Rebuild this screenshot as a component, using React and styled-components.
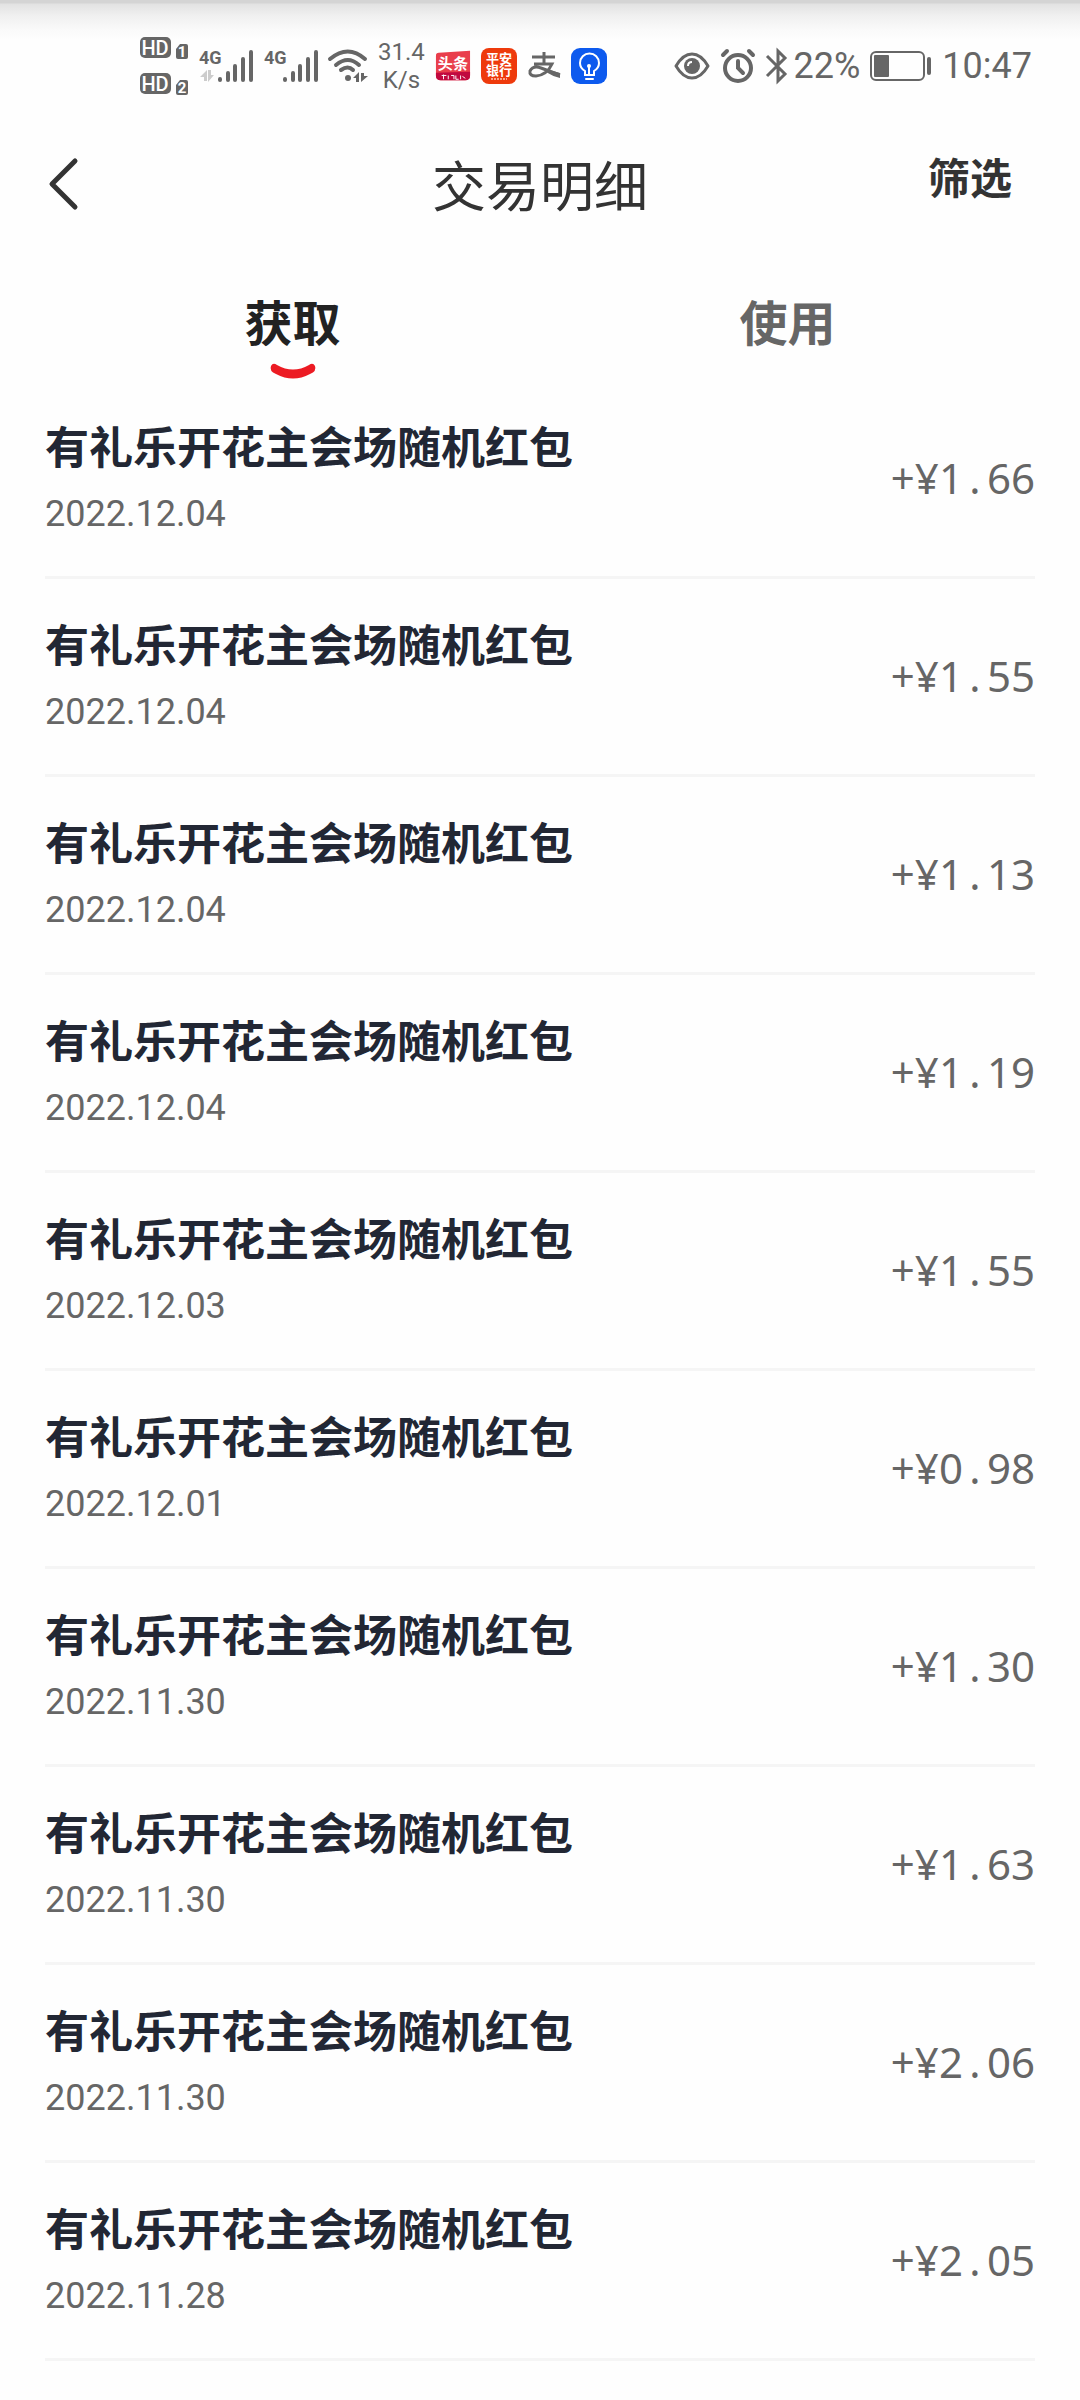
import React, { useState } from 'react';
import styled, { createGlobalStyle } from 'styled-components';

const records = [
    { id: 1, date: "2022.12.04", amount: "1.66" },
    { id: 2, date: "2022.12.04", amount: "1.55" },
    { id: 3, date: "2022.12.04", amount: "1.13" },
    { id: 4, date: "2022.12.04", amount: "1.19" },
    { id: 5, date: "2022.12.03", amount: "1.55" },
    { id: 6, date: "2022.12.01", amount: "0.98" },
    { id: 7, date: "2022.11.30", amount: "1.30" },
    { id: 8, date: "2022.11.30", amount: "1.63" },
    { id: 9, date: "2022.11.30", amount: "2.06" },
    { id: 10, date: "2022.11.28", amount: "2.05" },
];

const tabs = ["获取", "使用"];

const HdIcon = ({ sim }) => (
    <svg width="48" height="26" viewBox="0 -2 48 26">
        <rect x="0" y="0" width="31" height="21" rx="5" fill="#666" />
        <text x="15" y="18" textAnchor="middle" fontSize="20" fontWeight="500" fill="#fff">HD</text>
        <path d="M36 12l4-5h6q2 0 2 2v11q0 2-2 2h-8q-2 0-2-2z" fill="#666" />
        <text x="42" y="20" textAnchor="middle" fontSize="15" fontWeight="700" fill="#fff">{sim}</text>
    </svg>
);

const SignalIcon = ({ data }) => (
    <svg width="55" height="40" viewBox="0 -2 55 40">
        <text x="1" y="16" fontSize="18" fontWeight="700" fill="#666">4G</text>
        {data && (
            <path d="M2 29h4v4h3V22zM10 22v12l6-7h-3v-5z" fill="#ccc" />
        )}
        <g stroke="#666" strokeWidth="4" strokeLinecap="round">
            <path d="M22 31v1M30 25v7M37 18v14M45 11v21M53 4v28" />
        </g>
    </svg>
);

const WifiIcon = () => (
    <svg width="40" height="34" viewBox="0 0 40 34">
        <g fill="none" stroke="#666" strokeWidth="4" strokeLinecap="round">
            <path d="M2 10Q20-5 37 10" />
            <path d="M8 16Q20 6 31 16" />
            <path d="M13 21Q20 16 25 21" />
        </g>
        <circle cx="20" cy="29" r="3" fill="#666" />
        <path d="M25 29l6-6v10h-3v-4zM33 24h3v3h4l-7 6z" fill="#666" />
    </svg>
);

const NewsIcon = () => (
    <svg width="36" height="32" viewBox="0 0 38 32">
        <path d="M1 5q0-3 3-3L37 0v26q0 5-5 5H6q-5 0-5-5z" fill="#e93e4c" />
        <path d="M1 23l36-1v4q0 5-5 5H6q-5 0-5-5z" fill="#c1093f" />
        <text x="19" y="19" textAnchor="middle" fontSize="16" fontWeight="700" fill="#fff">头条</text>
        <path d="M7 26h5M9 25v5M14 26v4M17 26h3v4M22 26v4h3M27 26v4M29 27l3 2" stroke="#fff" strokeWidth="1" fill="none" />
    </svg>
);

const BankIcon = () => (
    <svg width="36" height="36" viewBox="0 0 36 36">
        <rect width="36" height="36" rx="8" fill="#ee3a0c" />
        <text x="18" y="15" textAnchor="middle" fontSize="13" fontWeight="700" fill="#fff">平安</text>
        <text x="18" y="27" textAnchor="middle" fontSize="13" fontWeight="700" fill="#fff">银行</text>
        <path d="M10 31h16" stroke="#fba58b" strokeWidth="2" strokeDasharray="2 1" />
    </svg>
);

const PayIcon = () => (
    <svg width="34" height="28" viewBox="0 0 34 28">
        <g fill="none" stroke="#666" strokeWidth="3">
            <path d="M5 5h23M17 0v12M7 12h18Q20 23 9 24Q2 24 3 19Q6 13 14 16Q22 19 33 23" />
        </g>
        <path d="M19 17l14 4v5q-8-2-14-6z" fill="#666" />
    </svg>
);

const BulbIcon = () => (
    <svg width="36" height="36" viewBox="0 0 36 36">
        <rect width="36" height="36" rx="9" fill="#0d5aee" />
        <g fill="none" stroke="#fff" strokeWidth="2" strokeLinecap="round">
            <path d="M14 27v-4q-5-3-5-8a9 9 0 0 1 19 0q0 5-5 8v4zM15 31h7M18 19v7" />
        </g>
        <circle cx="18" cy="18" r="2" fill="#fff" />
    </svg>
);

const EyeIcon = () => (
    <svg width="36" height="28" viewBox="0 0 36 28">
        <path d="M2 14Q9 2 18 2T34 14Q27 26 18 26T2 14z" fill="none" stroke="#666" strokeWidth="3" strokeLinejoin="round" />
        <circle cx="18" cy="14" r="8" fill="#666" />
        <path d="M14 14q0-4 4-4" fill="none" stroke="#fff" strokeWidth="2" />
    </svg>
);

const AlarmIcon = () => (
    <svg width="36" height="34" viewBox="-1 0 36 34">
        <g fill="none" stroke="#666" strokeWidth="4" strokeLinecap="round">
            <circle cx="17" cy="19" r="13" />
            <path d="M17 12v7l5 5M2 6l4-4M28 2l4 4" />
        </g>
    </svg>
);

const BluetoothIcon = () => (
    <svg width="22" height="34" viewBox="0 0 22 34">
        <path d="M1 7l18 18-7 7V2l7 7L1 27" fill="none" stroke="#666" strokeWidth="3" />
    </svg>
);

const BatteryIcon = () => (
    <svg width="62" height="30" viewBox="0 0 62 30">
        <rect x="1" y="1" width="53" height="28" rx="5" fill="none" stroke="#666" strokeWidth="2" />
        <rect x="4" y="4" width="15" height="22" rx="1" fill="#666" />
        <rect x="57" y="6" width="4" height="18" rx="2" fill="#666" />
    </svg>
);

const StatusBar = () => (
    <StatusWrapper>
        <StatusGroup>
            <HdStack>
                <HdIcon sim="1" />
                <HdIcon sim="2" />
            </HdStack>
            <SignalIcon data />
            <SignalIcon />
            <WifiIcon />
            <Speed>
                <span>31.4</span>
                <span>K/s</span>
            </Speed>
            <NewsIcon />
            <BankIcon />
            <PayIcon />
            <BulbIcon />
        </StatusGroup>
        <StatusGroup>
            <EyeIcon />
            <AlarmIcon />
            <Battery>
                <BluetoothIcon />
                22%
            </Battery>
            <BatteryIcon />
            <Clock>10:47</Clock>
        </StatusGroup>
    </StatusWrapper>
);

const Amount = ({ value }) => {
    const [yuan, cents] = value.split(".");
    return (
        <AmountText>
            +¥{yuan}<Point>.</Point>{cents}
        </AmountText>
    );
};

const App = () => {
    const [activeTab, setActiveTab] = useState("获取");

    return (
        <Page>
            <GlobalStyle />
            <StatusBar />
            <Header>
                <BackButton type="button" aria-label="返回">
                    <svg width="32" height="52" viewBox="0 0 32 52">
                        <path d="M27 3L4 26l23 23" fill="none" stroke="#333" strokeWidth="5" strokeLinecap="round" strokeLinejoin="round" />
                    </svg>
                </BackButton>
                <Title>交易明细</Title>
                <FilterButton type="button">筛选</FilterButton>
            </Header>
            <Tabs>
                {tabs.map((tab) => (
                    <Tab
                        key={tab}
                        type="button"
                        $active={activeTab === tab}
                        onClick={() => setActiveTab(tab)}
                    >
                        {tab}
                        {activeTab === tab && (
                            <svg width="46" height="16" viewBox="0 0 46 16">
                                <path d="M1 3Q3-1 7 2Q23 11 39 2Q43-1 45 3Q47 8 40 11Q23 20 6 11Q-1 8 1 3z" fill="#ec1b23" />
                            </svg>
                        )}
                    </Tab>
                ))}
            </Tabs>
            <List>
                {records.map(({ id, date, amount }) => (
                    <Row key={id}>
                        <RowInfo>
                            <RowTitle>有礼乐开花主会场随机红包</RowTitle>
                            <RowDate>{date}</RowDate>
                        </RowInfo>
                        <Amount value={amount} />
                    </Row>
                ))}
            </List>
        </Page>
    );
};

const GlobalStyle = createGlobalStyle`
* {
    box-sizing: border-box;
}
body {
    margin: 0;
    background: #fefefe;
    font-family: Roboto, "Noto Sans CJK SC", sans-serif;
}
button {
    border: none;
    background: none;
    padding: 0;
    font-family: inherit;
    cursor: pointer;
}
svg {
    flex: none;
    display: block;
    overflow: visible;
}
`

const Page = styled.div`
min-height: 100vh;
background: linear-gradient(#d4d4d4 0, #d4d4d4 3px, #e2e2e2 4px, #f0f0f0 16px, #fafafa 30px, #fefefe 40px);
`

const StatusWrapper = styled.div`
display: flex;
justify-content: space-between;
align-items: center;
height: 132px;
padding: 0 48px 0 140px;
color: #666;
`

const StatusGroup = styled.div`
display: flex;
align-items: center;
gap: 10px;
`

const HdStack = styled.div`
display: flex;
flex-direction: column;
gap: 10px;
`

const Speed = styled.div`
display: flex;
flex-direction: column;
align-items: center;
font-size: 24px;
line-height: 28px;
`

const Battery = styled.div`
display: flex;
align-items: center;
gap: 6px;
font-size: 36px;
`

const Clock = styled.span`
font-size: 36px;
`

const Header = styled.header`
display: grid;
grid-template-columns: 1fr auto 1fr;
align-items: center;
height: 104px;
padding: 0 48px;
`

const BackButton = styled.button`
justify-self: start;
`

const Title = styled.h1`
margin: 0;
padding-top: 10px;
font-size: 54px;
line-height: 80px;
font-weight: 400;
color: #333;
`

const FilterButton = styled.button`
justify-self: end;
padding: 0 20px 8px;
font-size: 42px;
line-height: 64px;
font-weight: 700;
color: #333;
`

const Tabs = styled.nav`
display: flex;
height: 145px;
padding: 51px 45px 0;
`

const Tab = styled.button`
flex: 1;
display: flex;
flex-direction: column;
align-items: center;
font-size: 48px;
line-height: 76px;
font-weight: 700;
color: ${(props) => (props.$active ? "#222" : "#666")};
`

const List = styled.ul`
list-style: none;
margin: 0;
padding: 0 45px;
`

const Row = styled.li`
display: flex;
justify-content: space-between;
align-items: center;
height: 198px;
border-bottom: 3px solid #f5f5f5;
`

const RowInfo = styled.div`
padding-top: 6px;
`

const RowTitle = styled.div`
font-size: 44px;
line-height: 64px;
font-weight: 700;
color: #222734;
`

const RowDate = styled.div`
font-size: 36px;
line-height: 66px;
color: #666;
`

const AmountText = styled.div`
padding-bottom: 2px;
font-family: "Noto Sans", sans-serif;
font-size: 42px;
line-height: 64px;
color: #666;
`

const Point = styled.span`
display: inline-block;
width: 24px;
text-align: center;
`

export default App;
